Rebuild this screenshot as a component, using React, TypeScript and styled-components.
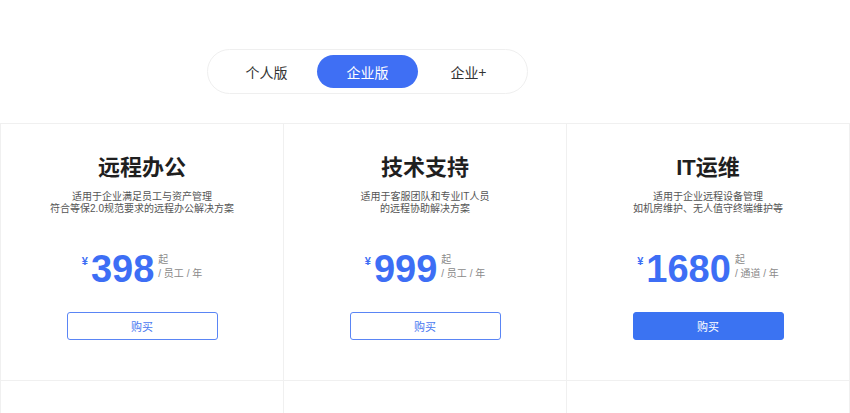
import { useState } from 'react';
import styled, { createGlobalStyle } from 'styled-components';

interface Plan {
    id: number;
    title: string;
    lines: string[];
    price: string;
    unit: string;
    primary?: boolean;
}

const plans: Plan[] = [
    {
        id: 1,
        title: '远程办公',
        lines: ['适用于企业满足员工与资产管理', '符合等保2.0规范要求的远程办公解决方案'],
        price: '398',
        unit: '/ 员工 / 年',
    },
    {
        id: 2,
        title: '技术支持',
        lines: ['适用于客服团队和专业IT人员', '的远程协助解决方案'],
        price: '999',
        unit: '/ 员工 / 年',
    },
    {
        id: 3,
        title: 'IT运维',
        lines: ['适用于企业远程设备管理', '如机房维护、无人值守终端维护等'],
        price: '1680',
        unit: '/ 通道 / 年',
        primary: true,
    },
];

const tabs = ['个人版', '企业版', '企业+'];

const App = () => {
    const [active, setActive] = useState(1);

    return (
        <Page>
            <GlobalStyle />
            <TabArea>
                <TabBar>
                    {tabs.map((t, i) => (
                        <Tab key={t} $active={i === active} onClick={() => setActive(i)}>
                            {t}
                        </Tab>
                    ))}
                </TabBar>
            </TabArea>
            <Grid>
                {plans.map((plan) => (
                    <Card key={plan.id}>
                        <Title>{plan.title}</Title>
                        <Desc>
                            {plan.lines.map((l) => (
                                <div key={l}>{l}</div>
                            ))}
                        </Desc>
                        <PriceRow>
                            <Currency>¥</Currency>
                            <Amount>{plan.price}</Amount>
                            <Side>
                                <span>起</span>
                                <span>{plan.unit}</span>
                            </Side>
                        </PriceRow>
                        <BuyButton $primary={plan.primary}>购买</BuyButton>
                    </Card>
                ))}
                {/* next row of plans, below the fold */}
                {plans.map((plan) => (
                    <Card key={'b' + plan.id} />
                ))}
            </Grid>
        </Page>
    );
};

export default App;

const GlobalStyle = createGlobalStyle`
    html, body {
        margin: 0;
        padding: 0;
        background: #fff;
    }
    body {
        font-family: "Liberation Sans", "Noto Sans CJK SC", sans-serif;
    }
`;

const Page = styled.div`
    width: 850px;
    background: #fff;
`;

const TabArea = styled.div`
    display: flex;
    padding: 49px 0 29px 207px;
`;

const TabBar = styled.div`
    display: flex;
    padding: 5px 8px;
    border: 1px solid #efefef;
    border-radius: 23px;
    background: #fff;
`;

const Tab = styled.div<{ $active?: boolean }>`
    width: 101px;
    height: 33px;
    display: flex;
    align-items: center;
    justify-content: center;
    border-radius: 17px;
    font-family: "Noto Sans CJK SC", sans-serif;
    font-size: 14px;
    cursor: pointer;
    color: ${(p) => (p.$active ? '#fff' : '#333')};
    background: ${(p) => (p.$active ? '#3f6ff4' : 'transparent')};
`;

const Grid = styled.div`
    display: grid;
    grid-template-columns: repeat(3, 1fr);
    border-top: 1px solid #f0f0f0;
    border-left: 1px solid #f0f0f0;
`;

const Card = styled.div`
    box-sizing: border-box;
    height: 257px;
    padding-top: 29px;
    display: flex;
    flex-direction: column;
    align-items: center;
    border-right: 1px solid #f0f0f0;
    border-bottom: 1px solid #f0f0f0;
`;

const Title = styled.h2`
    margin: 0;
    font-size: 22px;
    line-height: 30px;
    font-weight: 700;
    color: #1f1f1f;
`;

const Desc = styled.div`
    margin-top: 8px;
    font-size: 10px;
    line-height: 12px;
    color: #555;
    text-align: center;
`;

const PriceRow = styled.div`
    margin-top: 35px;
    display: flex;
    align-items: flex-start;
`;

const Currency = styled.span`
    font-size: 11px;
    line-height: 14px;
    margin-top: 4px;
    margin-right: 3px;
    color: #3d6ef5;
    font-weight: 700;
`;

const Amount = styled.span`
    font-size: 38px;
    line-height: 38px;
    font-weight: 700;
    color: #3d6ef5;
`;

const Side = styled.div`
    margin-top: 3px;
    margin-left: 4px;
    display: flex;
    flex-direction: column;
    font-size: 10px;
    line-height: 14px;
    color: #8a8a8a;
`;

const BuyButton = styled.button<{ $primary?: boolean }>`
    margin-top: 24px;
    width: 151px;
    height: 28px;
    border-radius: 3px;
    font-family: "Noto Sans CJK SC", sans-serif;
    font-size: 11px;
    cursor: pointer;
    border: 1px solid ${(p) => (p.$primary ? '#3b73f2' : '#5a85f5')};
    background: ${(p) => (p.$primary ? '#3b73f2' : '#fff')};
    color: ${(p) => (p.$primary ? '#fff' : '#4a78f0')};
`;
